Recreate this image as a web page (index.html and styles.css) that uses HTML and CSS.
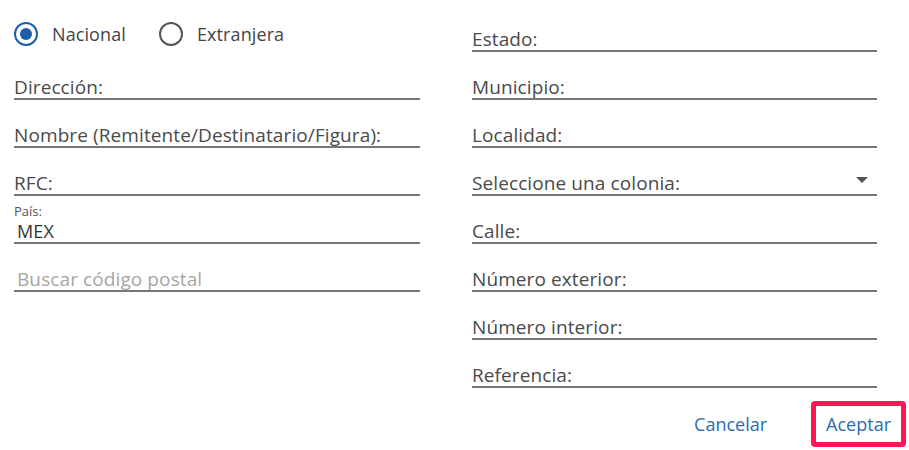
FILE: index.html
```html
<!DOCTYPE html>
<html lang="es">
<head>
<meta charset="utf-8">
<link rel="stylesheet" href="styles.css">
</head>
<body>
<div class="form">
  <div class="col">
    <div class="radios">
      <label class="radio"><span class="dot checked"></span>Nacional</label>
      <label class="radio"><span class="dot"></span>Extranjera</label>
    </div>
    <div class="field"><span class="lbl">Dirección:</span></div>
    <div class="field"><span class="lbl">Nombre (Remitente/Destinatario/Figura):</span></div>
    <div class="field"><span class="lbl">RFC:</span></div>
    <div class="field pais"><span class="small">País:</span><span class="val">MEX</span></div>
    <div class="field"><span class="ph">Buscar código postal</span></div>
  </div>
  <div class="col">
    <div class="field"><span class="lbl">Estado:</span></div>
    <div class="field"><span class="lbl">Municipio:</span></div>
    <div class="field"><span class="lbl">Localidad:</span></div>
    <div class="field select"><span class="lbl">Seleccione una colonia:</span><span class="caret"></span></div>
    <div class="field"><span class="lbl">Calle:</span></div>
    <div class="field"><span class="lbl">Número exterior:</span></div>
    <div class="field"><span class="lbl">Número interior:</span></div>
    <div class="field"><span class="lbl">Referencia:</span></div>
  </div>
</div>
<div class="actions">
  <button class="btn">Cancelar</button>
  <button class="btn primary">Aceptar</button>
</div>
</body>
</html>
```
FILE: styles.css
```css
* { box-sizing: border-box; }
body {
  margin: 0;
  background: #fff;
  font-family: "Open Sans", "Noto Sans", sans-serif;
  color: #4a4a4a;
  width: 909px;
  height: 450px;
  overflow: hidden;
}
.form {
  display: grid;
  grid-template-columns: 406px 405px;
  column-gap: 52px;
  padding: 4px 0 0 14px;
}
.col { display: flex; flex-direction: column; }
.radios {
  height: 48px;
  display: flex;
  align-items: flex-start;
  padding-top: 18px;
  gap: 33px;
}
.radio {
  display: flex;
  align-items: center;
  font-size: 18px;
  line-height: 24px;
  letter-spacing: 0.1px;
  color: #444;
}
.dot {
  width: 24px;
  height: 24px;
  border: 2px solid #555;
  border-radius: 50%;
  margin-right: 14px;
  position: relative;
  flex: none;
}
.dot.checked { border-color: #1f5ea8; }
.dot.checked::after {
  content: "";
  position: absolute;
  left: 4px; top: 4px;
  width: 12px; height: 12px;
  border-radius: 50%;
  background: #1f5ea8;
}
.field {
  height: 48px;
  border-bottom: 2px solid #777;
  display: flex;
  flex-direction: column;
  justify-content: flex-end;
  position: relative;
}
.lbl, .ph, .val {
  font-size: 19px;
  line-height: 21px;
  letter-spacing: 0.1px;
}
.ph { color: #a6a6a6; padding-left: 3px; }
.val { color: #333; padding-left: 3px; font-size: 18px; }
.small { font-size: 13px; line-height: 15px; color: #555; margin-bottom: 2px; }
.caret {
  position: absolute;
  right: 9px;
  top: 29px;
  width: 0; height: 0;
  border-left: 6px solid transparent;
  border-right: 6px solid transparent;
  border-top: 6px solid #555;
}
.actions {
  display: flex;
  justify-content: flex-end;
  align-items: center;
  gap: 44px;
  padding: 13px 3px 0 0;
}
.btn {
  font-family: inherit;
  font-size: 18px;
  letter-spacing: 0;
  color: #2a6bb0;
  background: #fff;
  border: 0;
  padding: 0;
  cursor: pointer;
}
.btn.primary {
  border: 5px solid #ff1654;
  border-radius: 4px;
  padding: 0 10px;
  height: 46px;
}
```
